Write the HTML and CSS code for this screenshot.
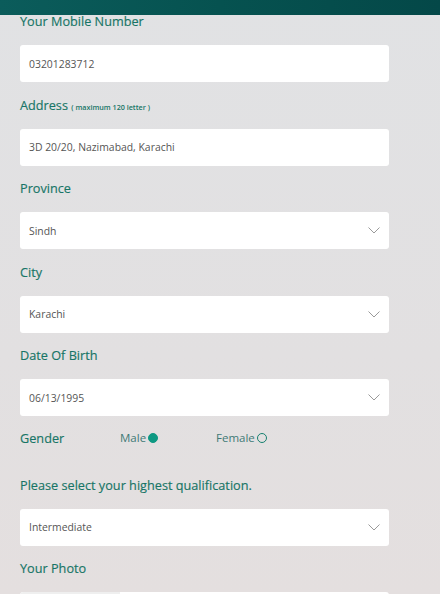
FILE: index.html
```html
<!DOCTYPE html>
<html>
<head>
<meta charset="utf-8">
<link rel="stylesheet" href="styles.css">
</head>
<body>
<div class="topbar"></div>
<form class="form">
  <div class="group">
    <div class="label">Your Mobile Number</div>
    <div class="field">03201283712</div>
  </div>
  <div class="group">
    <div class="label">Address <span class="note">( maximum 120 letter )</span></div>
    <div class="field">3D 20/20, Nazimabad, Karachi</div>
  </div>
  <div class="group">
    <div class="label">Province</div>
    <div class="field select">Sindh<svg class="chev" width="12" height="7" viewBox="0 0 12 7"><polyline points="0.5,0.5 6,6 11.5,0.5" fill="none" stroke="#9a9a9a" stroke-width="1"/></svg></div>
  </div>
  <div class="group">
    <div class="label">City</div>
    <div class="field select">Karachi<svg class="chev" width="12" height="7" viewBox="0 0 12 7"><polyline points="0.5,0.5 6,6 11.5,0.5" fill="none" stroke="#9a9a9a" stroke-width="1"/></svg></div>
  </div>
  <div class="group">
    <div class="label">Date Of Birth</div>
    <div class="field select">06/13/1995<svg class="chev" width="12" height="7" viewBox="0 0 12 7"><polyline points="0.5,0.5 6,6 11.5,0.5" fill="none" stroke="#9a9a9a" stroke-width="1"/></svg></div>
  </div>
  <div class="gender">
    <div class="label glabel">Gender</div>
    <div class="opt male">Male<span class="radio on"></span></div>
    <div class="opt female">Female<span class="radio"></span></div>
  </div>
  <div class="group">
    <div class="label">Please select your highest qualification.</div>
    <div class="field select">Intermediate<svg class="chev" width="12" height="7" viewBox="0 0 12 7"><polyline points="0.5,0.5 6,6 11.5,0.5" fill="none" stroke="#9a9a9a" stroke-width="1"/></svg></div>
  </div>
  <div class="group">
    <div class="label">Your Photo</div>
    <div class="field file"><span class="filebtn"></span></div>
  </div>
</form>
</body>
</html>
```
FILE: styles.css
```css
html, body {
  margin: 0;
  padding: 0;
  height: 594px;
  overflow: hidden;
}
body {
  background: linear-gradient(180deg, #e1e2e4 0%, #e2e0e1 60%, #e4dfdf 100%);
  font-family: "Open Sans", "Noto Sans", sans-serif;
}
.topbar {
  height: 15px;
  background: linear-gradient(90deg, #0b5c5b 0%, #065250 50%, #044848 100%);
}
.form {
  padding: 0 51px 0 20px;
  display: flex;
  flex-direction: column;
}
.group {
  display: flex;
  flex-direction: column;
  margin-bottom: 16.5px;
}
.label {
  height: 14px;
  line-height: 12px;
  font-size: 12.7px;
  font-weight: 500;
  color: #177566;
  margin-bottom: 16px;
  white-space: nowrap;
  -webkit-text-stroke: 0.15px #177566;
}
.note {
  font-size: 7.2px;
  font-weight: 600;
  -webkit-text-stroke: 0;
}
.field {
  height: 37px;
  background: #fff;
  border-radius: 3px;
  display: flex;
  align-items: center;
  padding: 0 10px 0 9px;
  font-size: 10.4px;
  color: #555;
  position: relative;
}
.select {
  justify-content: space-between;
}
.chev {
  display: block;
  margin-right: -1px;
}
.gender {
  display: flex;
  align-items: center;
  height: 14px;
  margin-top: -2px;
  margin-bottom: 34px;
}
.glabel {
  margin: 0;
  width: 100px;
  line-height: 14px;
}
.opt {
  display: flex;
  align-items: center;
  font-size: 11.5px;
  color: #3f7a76;
}
.male {
  width: 96px;
}
.radio {
  width: 8px;
  height: 8px;
  border-radius: 50%;
  border: 1px solid #16806f;
  margin-left: 2px;
  box-sizing: content-box;
}
.radio.on {
  background: #0e9983;
  border-color: #0e9983;
}
.file {
  padding: 0;
}
.filebtn {
  width: 100px;
  height: 100%;
  background: #efefef;
  border-radius: 3px 0 0 3px;
}
```
